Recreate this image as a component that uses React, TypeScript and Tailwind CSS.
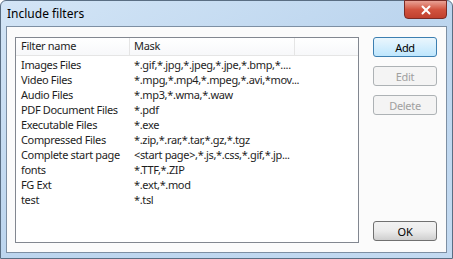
import { X } from "lucide-react";

const filters = [
  { name: "Images Files", mask: "*.gif,*.jpg,*.jpeg,*.jpe,*.bmp,*...." },
  { name: "Video Files", mask: "*.mpg,*.mp4,*.mpeg,*.avi,*mov..." },
  { name: "Audio Files", mask: "*.mp3,*.wma,*.waw" },
  { name: "PDF Document Files", mask: "*.pdf" },
  { name: "Executable Files", mask: "*.exe" },
  { name: "Compressed Files", mask: "*.zip,*.rar,*.tar,*.gz,*.tgz" },
  { name: "Complete start page", mask: "<start page>,*.js,*.css,*.gif,*.jp..." },
  { name: "fonts", mask: "*.TTF,*.ZIP" },
  { name: "FG Ext", mask: "*.ext,*.mod" },
  { name: "test", mask: "*.tsl" },
];

function DlgButton({ label, primary, disabled }: { label: string; primary?: boolean; disabled?: boolean }) {
  return (
    <button
      className={`w-[64px] h-[20px] rounded-[3px] border text-[11px] leading-none tracking-[-0.3px] ${
        primary
          ? "border-[#3c7fb1] bg-gradient-to-b from-[#eaf6fd] to-[#bee6fd] text-black"
          : disabled
          ? "border-[#adb2b5] bg-[#f4f4f4] text-[#a0a0a0]"
          : "border-[#707070] bg-gradient-to-b from-[#f2f2f2] via-[#ebebeb] to-[#cfcfcf] text-black"
      }`}
    >
      {label}
    </button>
  );
}

export default function App() {
  return (
    <div
      className="w-[453px] h-[259px] flex flex-col rounded-t-[6px] border border-[#5a6e83] bg-gradient-to-br from-[#d3e5f6] via-[#bcd5ee] to-[#c3daf1] text-[#1e1e1e]"
      style={{ fontFamily: '"Noto Sans", "Open Sans", sans-serif' }}
    >
      {/* Title bar */}
      <div className="h-[25px] flex items-start justify-between pl-[6px] pr-[5px]">
        <span className="mt-[5px] text-[12px] leading-[16px] text-black">Include filters</span>
        <div className="w-[43px] h-[19px] -mt-px rounded-b-[4px] border border-[#7a2b25] bg-gradient-to-b from-[#e8a195] via-[#d2533f] to-[#c0402e] flex items-center justify-center">
          <X size={14} strokeWidth={3.4} className="text-white" />
        </div>
      </div>

      {/* Client area */}
      <div className="mx-[5px] mb-[5px] flex-1 border border-[#7d8fa3] bg-[#fbfbfb] flex gap-[14px] pl-[8px] pr-[8px] pt-[10px] pb-[9px]">
        <div className="w-[344px] border border-[#828790] bg-white flex flex-col">
          <div className="h-[18px] flex text-[11px] tracking-[-0.3px] border-b border-[#e5e5e5] bg-gradient-to-b from-white to-[#f7f8fa]">
            <div className="w-[114px] pl-[5px] border-r border-[#e5e5e5] flex items-center">Filter name</div>
            <div className="w-[165px] pl-[4px] border-r border-[#e5e5e5] flex items-center">Mask</div>
            <div className="flex-1" />
          </div>
          <div className="pt-[2px]">
            {filters.map((f) => (
              <div key={f.name} className="h-[15px] flex items-center text-[11px] tracking-[-0.35px]">
                <div className="w-[114px] pl-[5px] whitespace-nowrap">{f.name}</div>
                <div className="pl-[4px] whitespace-nowrap">{f.mask}</div>
              </div>
            ))}
          </div>
        </div>

        <div className="flex flex-col justify-between pb-[2px]">
          <div className="flex flex-col gap-[9px]">
            <DlgButton label="Add" primary />
            <DlgButton label="Edit" disabled />
            <DlgButton label="Delete" disabled />
          </div>
          <DlgButton label="OK" />
        </div>
      </div>
    </div>
  );
}
